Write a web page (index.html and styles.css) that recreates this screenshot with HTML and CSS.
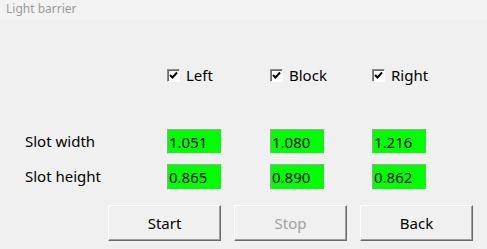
FILE: index.html
```html
<!DOCTYPE html>
<html lang="en">
<head>
    <meta charset="UTF-8">
    <title>Light barrier</title>
    <link rel="stylesheet" href="styles.css">
</head>
<body>
    <div class="window">
        <div class="titlebar">Light barrier</div>

        <div class="panel">
            <div class="row checks">
                <span></span>
                <label class="check">
                    <span class="box"><svg width="11" height="11" viewBox="0 0 11 11"><path d="M2 5 L4.5 7.5 L9 2.5" fill="none" stroke="#000" stroke-width="2"/></svg></span>Left
                </label>
                <label class="check">
                    <span class="box"><svg width="11" height="11" viewBox="0 0 11 11"><path d="M2 5 L4.5 7.5 L9 2.5" fill="none" stroke="#000" stroke-width="2"/></svg></span>Block
                </label>
                <label class="check">
                    <span class="box"><svg width="11" height="11" viewBox="0 0 11 11"><path d="M2 5 L4.5 7.5 L9 2.5" fill="none" stroke="#000" stroke-width="2"/></svg></span>Right
                </label>
            </div>

            <div class="row values first">
                <span class="label">Slot width</span>
                <span class="value">1.051</span>
                <span class="value">1.080</span>
                <span class="value">1.216</span>
            </div>

            <div class="row values">
                <span class="label">Slot height</span>
                <span class="value">0.865</span>
                <span class="value">0.890</span>
                <span class="value">0.862</span>
            </div>

            <div class="buttons">
                <button class="btn">Start</button>
                <button class="btn" disabled>Stop</button>
                <button class="btn">Back</button>
            </div>
        </div>
    </div>
</body>
</html>
```

FILE: styles.css
```css
* {
    margin: 0;
    padding: 0;
    box-sizing: border-box;
    font-family: 'Noto Sans', 'Open Sans', sans-serif;
}

body {
    background-color: #f0f0f0;
    color: #000;
    width: 487px;
    height: 249px;
    overflow: hidden;
}

.titlebar {
    height: 20px;
    background: #f3f3f3;
    color: #9a9a9a;
    font-size: 12px;
    line-height: 18px;
    padding-left: 6px;
}

.panel {
    padding: 44px 0 0 25px;
}

.row {
    display: grid;
    grid-template-columns: 142px 103px 102px 102px;
    align-items: center;
    font-size: 15px;
}

.checks {
    height: 22px;
}

.check {
    display: flex;
    align-items: center;
}

.box {
    width: 13px;
    height: 13px;
    margin-right: 6px;
    background: #fff;
    border: 1px solid;
    border-color: #8a8a8a #fff #fff #8a8a8a;
    box-shadow: inset 1px 1px 0 #6a6a6a;
    display: flex;
}

.box svg {
    display: block;
}

.label {
    padding-bottom: 2px;
}

.values {
    margin-top: 10px;
    height: 26px;
}

.values.first {
    margin-top: 43px;
    height: 25px;
}

.value {
    width: 55px;
    height: 100%;
    background: #00ff00;
    border: 1px solid;
    border-color: #a0a0a0 #fff #fff #a0a0a0;
    padding-left: 1px;
    display: flex;
    align-items: center;
}

.buttons {
    display: flex;
    gap: 13px;
    margin: 15px 0 0 83px;
}

.btn {
    width: 113px;
    height: 36px;
    background: #f0f0f0;
    border: 1px solid;
    border-color: #fff #696969 #696969 #fff;
    box-shadow: inset -1px -1px 0 #a0a0a0;
    font-size: 15px;
    color: #000;
}

.btn:disabled {
    color: #a0a0a0;
}
```
